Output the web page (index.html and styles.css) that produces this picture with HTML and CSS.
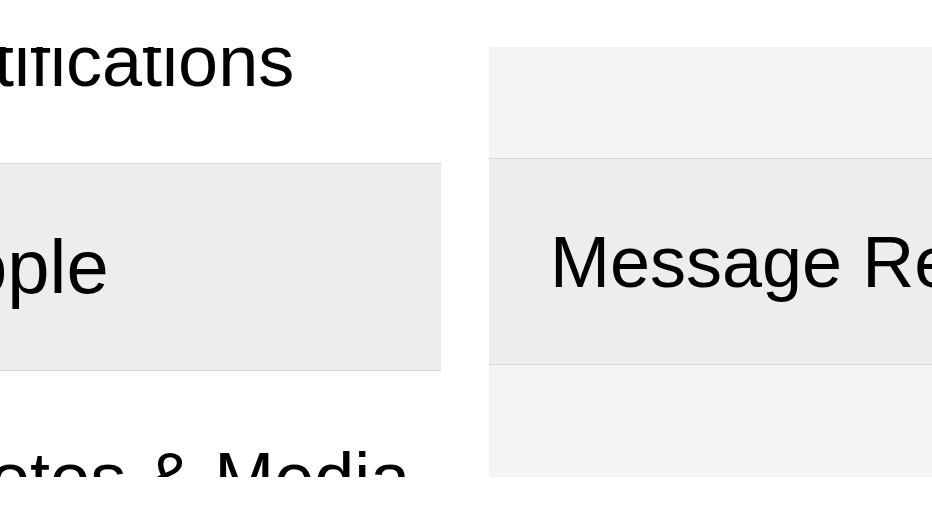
FILE: index.html
```html
<!DOCTYPE html>
<html lang="en">
<head>
    <meta charset="UTF-8">
    <meta name="viewport" content="width=device-width, initial-scale=1.0">
    <title>Settings</title>
    <link rel="stylesheet" href="styles.css">
</head>
<body>
    <div class="screen">
        <!-- Settings list (left) -->
        <div class="panel list">
            <div class="section-title">Notifications</div>
            <div class="row selected">People</div>
            <div class="section-title next">Photos &amp; Media</div>
        </div>

        <!-- Detail pane (right) -->
        <div class="panel detail">
            <div class="spacer"></div>
            <div class="row">Message Requests</div>
            <div class="spacer"></div>
        </div>
    </div>
</body>
</html>
```

FILE: styles.css
```css
body {
    margin: 0;
    background-color: #fff;
    font-family: "Liberation Sans", Arial, sans-serif;
    color: #000;
}

/* visible window of the screenshot: everything outside is cut */
.screen {
    display: flex;
    gap: 48px;
    margin-top: 47px;
    height: 430px;
    width: 932px;
    overflow: hidden;
}

.panel {
    height: 430px;
    overflow: hidden;
    flex-shrink: 0;
    font-size: 72px;
    line-height: 72px;
    white-space: nowrap;
}

.list {
    width: 607px;
    margin-left: -166px; /* the crop starts partway into the list */
}

.detail {
    width: 443px;
    background-color: #f3f3f3;
}

/* tight line-height so the title's tops get cut by the window edge */
.section-title {
    padding-left: 68px;
    height: 116px;
    line-height: 28px;
}

.section-title.next {
    margin-top: 93px;
}

.row {
    display: flex;
    align-items: center;
    padding-left: 61px;
    background-color: #ededed;
    border-top: 1px solid #d6d6d6;
    border-bottom: 1px solid #d6d6d6;
}

.list .row {
    height: 206px;
    padding-left: 38px;
    font-size: 76px;
}

.detail .row {
    height: 205px;
}

.detail .spacer {
    height: 111px;
}
```
